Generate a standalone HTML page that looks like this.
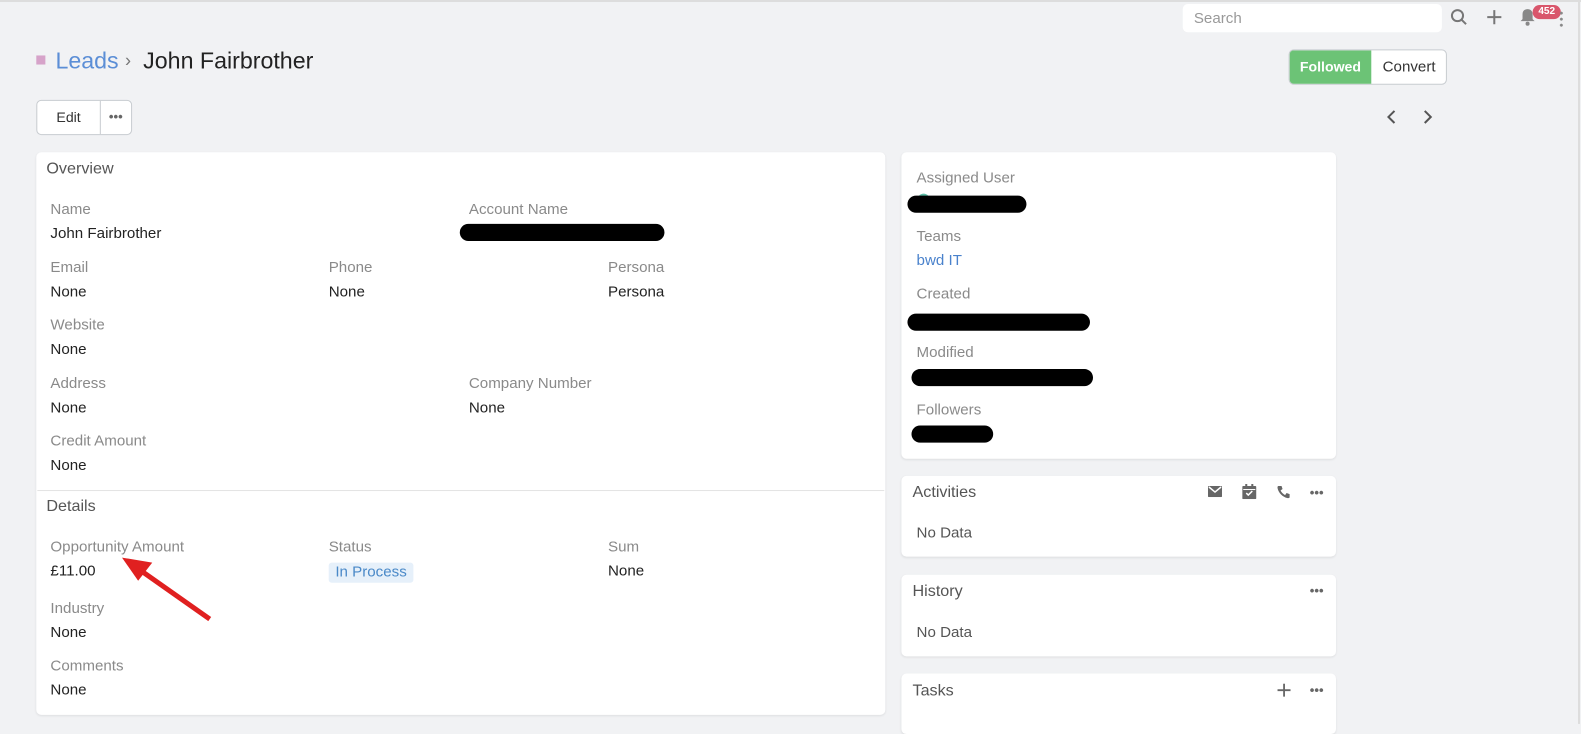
<!DOCTYPE html>
<html><head><meta charset="utf-8"><style>
*{box-sizing:border-box;margin:0;padding:0}
body{width:1581px;height:718px;overflow:hidden;background:#f1f2f4;font-family:"Liberation Sans",sans-serif;font-size:15px;color:#333;position:relative}
#w{position:absolute;left:0;top:0;width:1568px;height:712px;transform:scale(1.0083);transform-origin:0 0}
.abs{position:absolute}
.panel{position:absolute;background:#fff;border-radius:5px;box-shadow:0 1px 2px rgba(0,0,0,.08)}
.lbl{position:absolute;color:#8a8a8a;font-size:15px;padding-top:1px}
.val{position:absolute;color:#222;font-size:15px;padding-top:1px}
.hd{position:absolute;color:#555;font-size:16px;padding-top:1px}
.red{position:absolute;background:#000;border-radius:9px;height:17px}
.dots{position:absolute;color:#666;font-size:13px;font-weight:bold}
</style></head><body><div id="w">
<div class="abs" style="left:0;top:0;width:1568px;height:2px;background:#ddd"></div>
<div class="abs" style="left:1565px;top:0;width:2px;height:718px;background:#ddd"></div>
<div class="abs" style="left:1173px;top:4px;width:257px;height:28px;background:#fff;border-radius:5px;color:#999;padding:6px 11px;font-size:15px">Search</div>
<svg class="abs" style="left:1438px;top:8px" width="18" height="18" viewBox="0 0 18 18"><circle cx="7.5" cy="7.5" r="5.5" fill="none" stroke="#777" stroke-width="2"/><line x1="11.5" y1="11.5" x2="16" y2="16" stroke="#777" stroke-width="2"/></svg>
<svg class="abs" style="left:1474px;top:9px" width="16" height="16"><path d="M8 1v14M1 8h14" stroke="#777" stroke-width="2"/></svg>
<svg class="abs" style="left:1507px;top:8px" width="16" height="18" viewBox="0 0 16 18"><path d="M8 1c-3 0-5 2-5 5v5l-2 2h14l-2-2V6c0-3-2-5-5-5z" fill="#888"/><circle cx="8" cy="15.5" r="2" fill="#888"/></svg>
<div class="abs" style="left:1520px;top:5px;width:28px;height:14px;background:#d9566c;border-radius:7px;color:#fff;font-size:10px;font-weight:bold;text-align:center;line-height:14px">452</div>
<div class="abs" style="left:1547px;top:10px;width:3px;height:18px;background:radial-gradient(circle,#888 1.3px,transparent 1.6px) 0 0/3px 6px"></div>

<div class="abs" style="left:36px;top:55px;width:9px;height:9px;background:#d6a3c9"></div>
<div class="abs" style="left:55px;top:47px;font-size:23px;color:#5b8ed6">Leads</div>
<div class="abs" style="left:124px;top:50px;font-size:18px;color:#777">›</div>
<div class="abs" style="left:142px;top:47px;font-size:23px;color:#222">John Fairbrother</div>

<div class="abs" style="left:1278px;top:49px;width:157px;height:35px;border:1px solid #c8ccd0;border-radius:5px;background:#fff;overflow:hidden">
<div class="abs" style="left:0;top:0;width:81px;height:35px;background:#6cc376;color:#fff;text-align:center;line-height:33px;font-weight:bold;font-size:14px">Followed</div>
<div class="abs" style="left:81px;top:0;width:75px;height:33px;color:#333;text-align:center;line-height:33px;font-size:15px">Convert</div></div>
<svg class="abs" style="left:1374px;top:108px" width="12" height="16"><path d="M9 2L3 8l6 6" stroke="#555" stroke-width="2" fill="none"/></svg>
<svg class="abs" style="left:1410px;top:108px" width="12" height="16"><path d="M3 2l6 6-6 6" stroke="#555" stroke-width="2" fill="none"/></svg>

<div class="abs" style="left:36px;top:99px;width:95px;height:35px;border:1px solid #c8ccd0;border-radius:5px;background:#fff">
<div class="abs" style="left:0;top:0;width:63px;height:33px;border-right:1px solid #c8ccd0;text-align:center;line-height:33px;font-size:14px">Edit</div>
<div class="dots" style="left:71px;top:8px">•••</div></div>

<div class="panel" style="left:36px;top:151px;width:842px;height:558px"></div>
<div class="abs" style="left:37px;top:486px;width:840px;height:1px;background:#e4e4e4"></div>
<div class="hd" style="left:46px;top:158px">Overview</div>
<div class="lbl" style="left:50px;top:198px">Name</div><div class="val" style="left:50px;top:222px">John Fairbrother</div>
<div class="lbl" style="left:465px;top:198px">Account Name</div><div class="red" style="left:456px;top:222px;width:203px"></div>
<div class="lbl" style="left:50px;top:256px">Email</div><div class="val" style="left:50px;top:280px">None</div>
<div class="lbl" style="left:326px;top:256px">Phone</div><div class="val" style="left:326px;top:280px">None</div>
<div class="lbl" style="left:603px;top:256px">Persona</div><div class="val" style="left:603px;top:280px">Persona</div>
<div class="lbl" style="left:50px;top:313px">Website</div><div class="val" style="left:50px;top:337px">None</div>
<div class="lbl" style="left:50px;top:371px">Address</div><div class="val" style="left:50px;top:395px">None</div>
<div class="lbl" style="left:465px;top:371px">Company Number</div><div class="val" style="left:465px;top:395px">None</div>
<div class="lbl" style="left:50px;top:428px">Credit Amount</div><div class="val" style="left:50px;top:452px">None</div>
<div class="hd" style="left:46px;top:493px">Details</div>
<div class="lbl" style="left:50px;top:533px">Opportunity Amount</div><div class="val" style="left:50px;top:557px">£11.00</div>
<div class="lbl" style="left:326px;top:533px">Status</div>
<div class="abs" style="left:326px;top:558px;width:84px;height:20px;background:#e6f0fa;color:#4a89c8;border-radius:3px;text-align:center;line-height:20px;font-size:15px">In Process</div>
<div class="lbl" style="left:603px;top:533px">Sum</div><div class="val" style="left:603px;top:557px">None</div>
<div class="lbl" style="left:50px;top:594px">Industry</div><div class="val" style="left:50px;top:618px">None</div>
<div class="lbl" style="left:50px;top:651px">Comments</div><div class="val" style="left:50px;top:675px">None</div>
<svg class="abs" style="left:115px;top:550px" width="100" height="70"><line x1="93" y1="64" x2="22" y2="14" stroke="#e02020" stroke-width="5"/><polygon points="6,3 36,8 22,26" fill="#e02020"/></svg>

<div class="panel" style="left:894px;top:151px;width:431px;height:304px"></div>
<div class="lbl" style="left:909px;top:167px">Assigned User</div>
<div class="abs" style="left:910px;top:192px;width:12px;height:12px;border-radius:6px;background:#5fbfa8"></div>
<div class="red" style="left:900px;top:194px;width:118px"></div>
<div class="lbl" style="left:909px;top:225px">Teams</div><div class="val" style="left:909px;top:249px;color:#4a82cc">bwd IT</div>
<div class="lbl" style="left:909px;top:282px">Created</div><div class="red" style="left:900px;top:311px;width:181px"></div>
<div class="lbl" style="left:909px;top:340px">Modified</div><div class="red" style="left:904px;top:366px;width:180px"></div>
<div class="lbl" style="left:909px;top:397px">Followers</div><div class="red" style="left:904px;top:422px;width:81px"></div>

<div class="panel" style="left:894px;top:472px;width:431px;height:80px"></div>
<div class="hd" style="left:905px;top:479px">Activities</div>
<svg class="abs" style="left:1198px;top:482px" width="14" height="11"><rect width="14" height="11" rx="1" fill="#666"/><path d="M1 1l6 5 6-5" stroke="#fff" stroke-width="1.5" fill="none"/></svg>
<svg class="abs" style="left:1232px;top:480px" width="14" height="15"><rect y="2" width="14" height="13" rx="1" fill="#666"/><rect x="3" y="0" width="2" height="4" fill="#666"/><rect x="9" y="0" width="2" height="4" fill="#666"/><rect x="1" y="5" width="12" height="1" fill="#fff"/><path d="M4 9l2 2 4-4" stroke="#fff" stroke-width="1.5" fill="none"/></svg>
<svg class="abs" style="left:1266px;top:481px" width="14" height="14" viewBox="0 0 14 14"><path d="M2 1l3 0 1 3-2 1.5c1 2 2.5 3.5 4.5 4.5L10 8l3 1v3c0 1-1 1-2 1C6 12 2 8 1 3c0-1 0-2 1-2z" fill="#666"/></svg>
<div class="dots" style="left:1299px;top:481px">•••</div>
<div class="val" style="left:909px;top:519px;color:#555">No Data</div>

<div class="panel" style="left:894px;top:570px;width:431px;height:81px"></div>
<div class="hd" style="left:905px;top:577px">History</div><div class="dots" style="left:1299px;top:578px">•••</div>
<div class="val" style="left:909px;top:618px;color:#555">No Data</div>

<div class="panel" style="left:894px;top:668px;width:431px;height:60px"></div>
<div class="hd" style="left:905px;top:676px">Tasks</div>
<svg class="abs" style="left:1267px;top:678px" width="13" height="13"><path d="M6.5 0v13M0 6.5h13" stroke="#666" stroke-width="1.8"/></svg>
<div class="dots" style="left:1299px;top:677px">•••</div>
</div></body></html>
